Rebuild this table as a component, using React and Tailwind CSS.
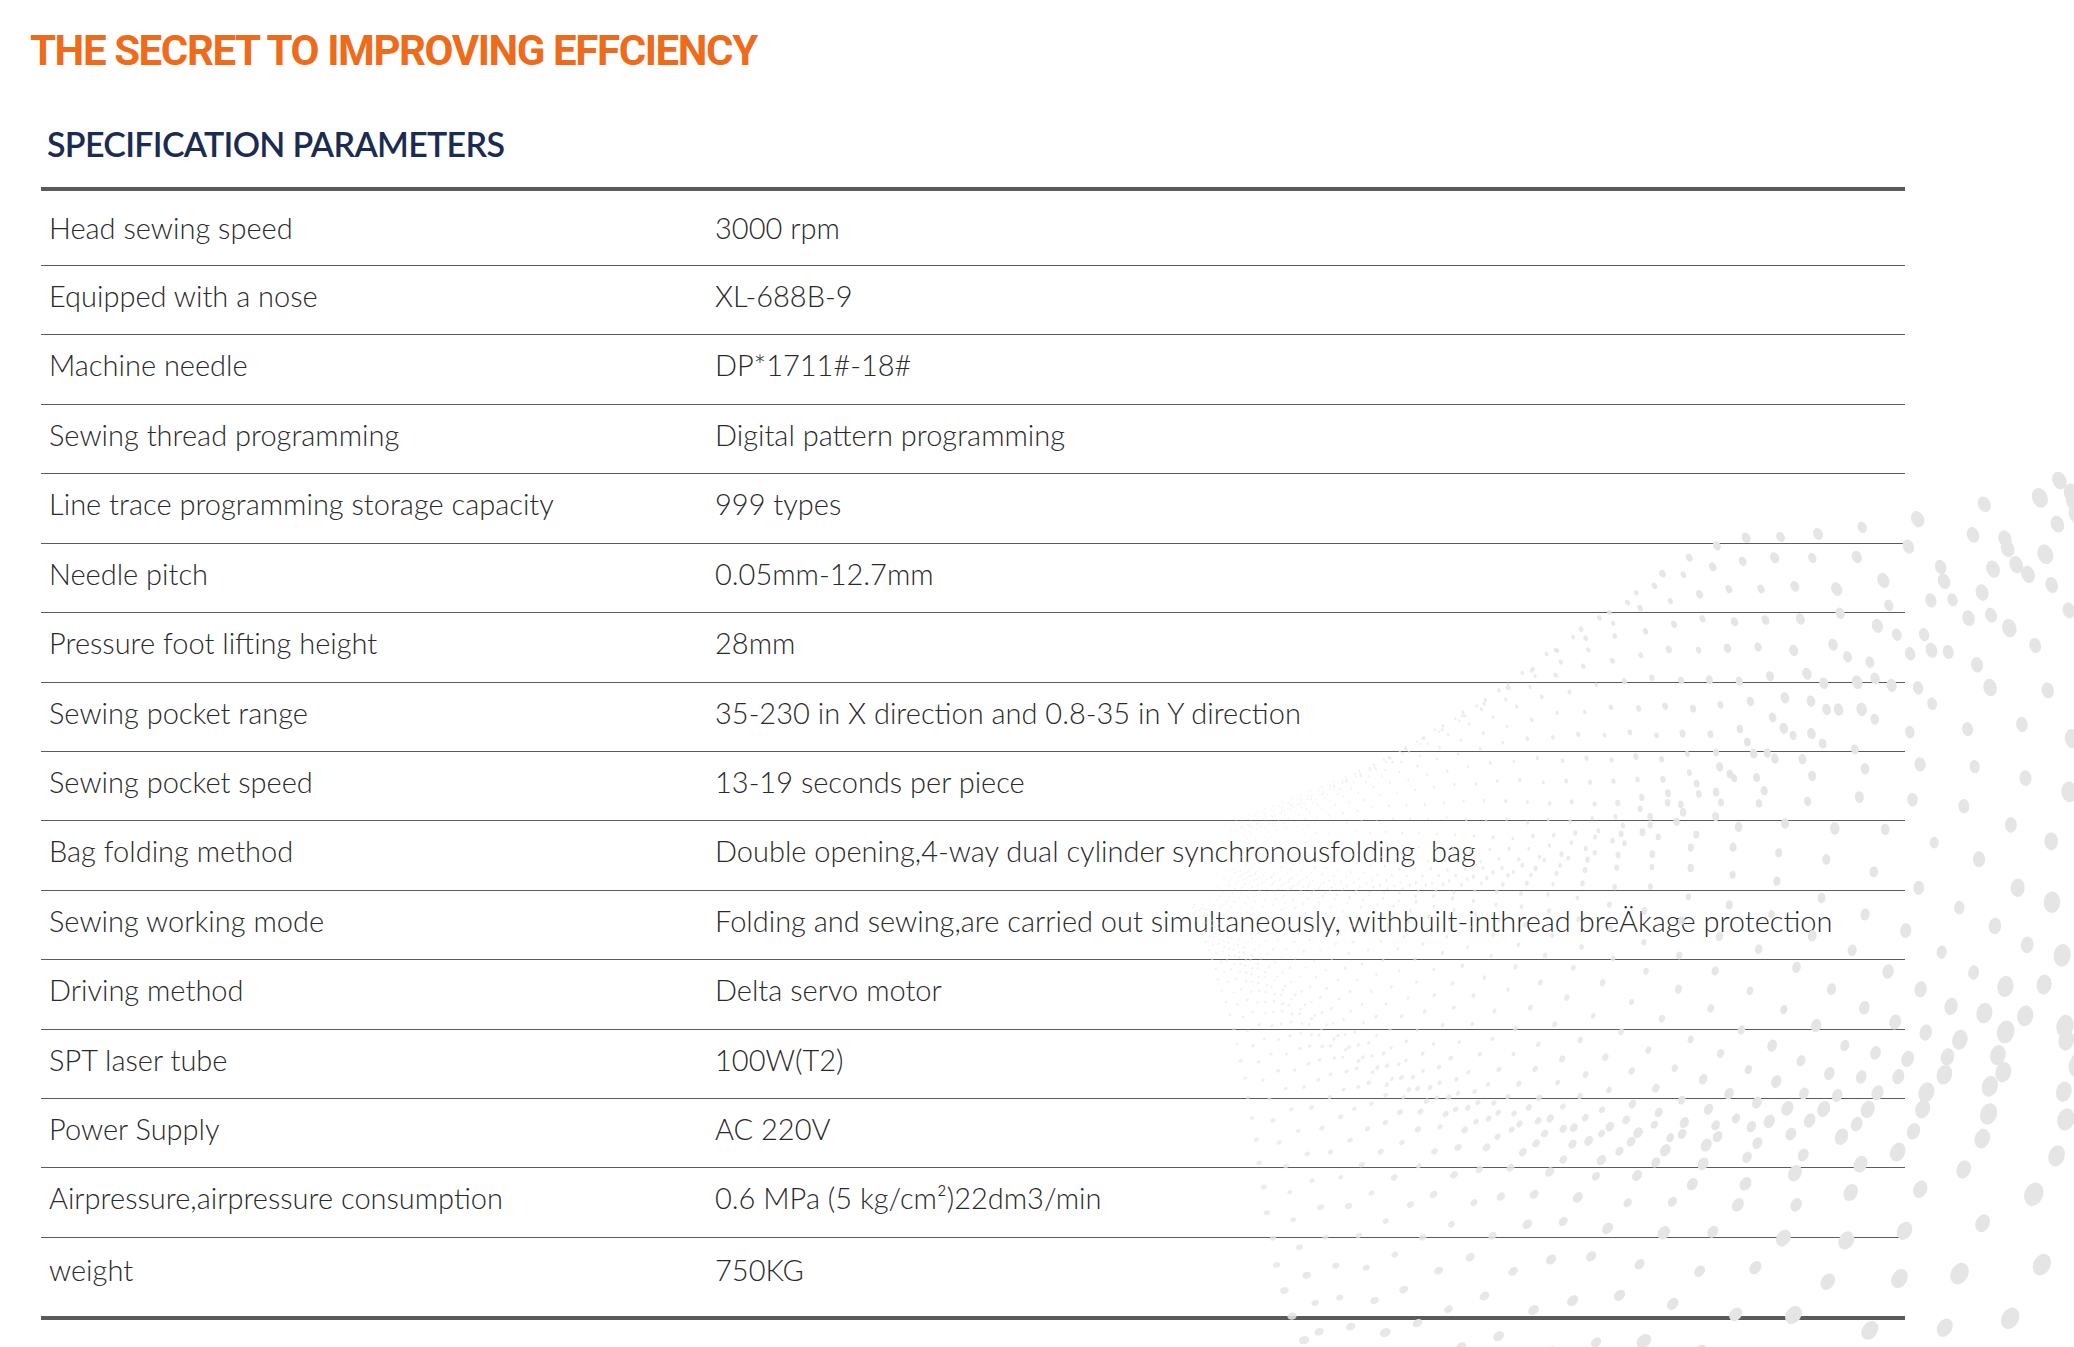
import React from 'react'

const specs = [
  ['Head sewing speed', '3000 rpm'],
  ['Equipped with a nose', 'XL-688B-9'],
  ['Machine needle', 'DP*1711#-18#'],
  ['Sewing thread programming', 'Digital pattern programming'],
  ['Line trace programming storage capacity', '999 types'],
  ['Needle pitch', '0.05mm-12.7mm'],
  ['Pressure foot lifting height', '28mm'],
  ['Sewing pocket range', '35-230 in X direction and 0.8-35 in Y direction'],
  ['Sewing pocket speed', '13-19 seconds per piece'],
  ['Bag folding method', 'Double opening,4-way dual cylinder synchronousfolding  bag'],
  ['Sewing working mode', 'Folding and sewing,are carried out simultaneously, withbuilt-inthread breÄkage protection'],
  ['Driving method', 'Delta servo motor'],
  ['SPT laser tube', '100W(T2)'],
  ['Power Supply', 'AC 220V'],
  ['Airpressure,airpressure consumption', '0.6 MPa (5 kg/cm²)22dm3/min'],
  ['weight', '750KG'],
]

// particle fan spreading from a point left of the corner
function makeDots() {
  let seed = 11
  const rnd = () => {
    seed = (seed * 16807) % 2147483647
    return seed / 2147483647
  }
  const ax = 1170
  const ay = 850
  const thMin = (-26 * Math.PI) / 180
  const thMax = (72 * Math.PI) / 180
  const M = 42
  const dots = []
  for (let j = 0; j <= M; j++) {
    const u = Math.pow(j / M, 1.25)
    const th0 = thMin + (thMax - thMin) * u
    let d = 60 + rnd() * 20
    while (d < 1300) {
      const th = th0 + 0.06 * Math.sin(d / 120 + j * 0.4) + (rnd() - 0.5) * 0.01
      const dd = d * (1 + 0.04 * Math.sin(th0 * 8 + d / 95))
      const x = ax + dd * Math.cos(th)
      const y = ay + dd * Math.sin(th)
      if (x > 1150 && x < 2090 && y > 440 && y < 1360) {
        const k = d / 1000
        const r = (0.8 + 11.5 * k * k) * (0.75 + 0.45 * u) * (0.85 + rnd() * 0.3)
        dots.push({
          x,
          y,
          rx: r * 0.85,
          ry: r * 1.12,
          a: (th * 180) / Math.PI,
          o: Math.min(1, 0.4 + k),
        })
      }
      d = d * 1.06 + 3
    }
  }
  return dots
}

const dots = makeDots()

function DotWave() {
  return (
    <svg
      className="absolute left-0 top-0 pointer-events-none"
      width="2074"
      height="1347"
      viewBox="0 0 2074 1347"
    >
      {dots.map((d, k) => (
        <ellipse
          key={k}
          cx={d.x}
          cy={d.y}
          rx={d.rx}
          ry={d.ry}
          fill="#e5e5e5"
          opacity={d.o}
          transform={`rotate(${d.a} ${d.x} ${d.y})`}
        />
      ))}
    </svg>
  )
}

export default function App() {
  return (
    <div className="relative min-h-[1347px] w-full overflow-hidden bg-white">
      <div className="relative">
        <h1
          className="pl-[30px] pt-[30px] text-[42px] leading-[42px] font-bold tracking-[-1.4px] text-[#ef6b1c]"
          style={{ fontFamily: 'Roboto, "Liberation Sans", sans-serif' }}
        >
          THE SECRET TO IMPROVING EFFCIENCY
        </h1>

        <h2
          className="pl-[47px] mt-[54px] text-[34px] leading-[35px] font-semibold tracking-[-0.7px] text-[#1b2b52]"
          style={{ fontFamily: 'Lato, "Noto Sans", sans-serif' }}
        >
          SPECIFICATION PARAMETERS
        </h2>

        {/* spec table */}
        <div
          className="ml-[41px] mt-[26px] w-[1864px] border-t-4 border-b-4 border-[#5a5a5a] text-[29px] leading-[29px] font-light text-[#2a2a2a]"
          style={{ fontFamily: 'Lato, "Noto Sans", sans-serif' }}
        >
          {specs.map(([label, value], i) => {
            const first = i === 0
            const last = i === specs.length - 1
            return (
              <div
                key={label}
                className={
                  first
                    ? 'flex h-[75px] pt-[22px] border-b border-[#5c5c5c]'
                    : last
                    ? 'flex h-[78px] pt-[17px]'
                    : 'flex h-[69.43px] pt-[15px] border-b border-[#5c5c5c]'
                }
              >
                <div className="w-[674px] pl-[8px] shrink-0">{label}</div>
                <div className="whitespace-pre">{value}</div>
              </div>
            )
          })}
        </div>
      </div>

      <DotWave />
    </div>
  )
}
